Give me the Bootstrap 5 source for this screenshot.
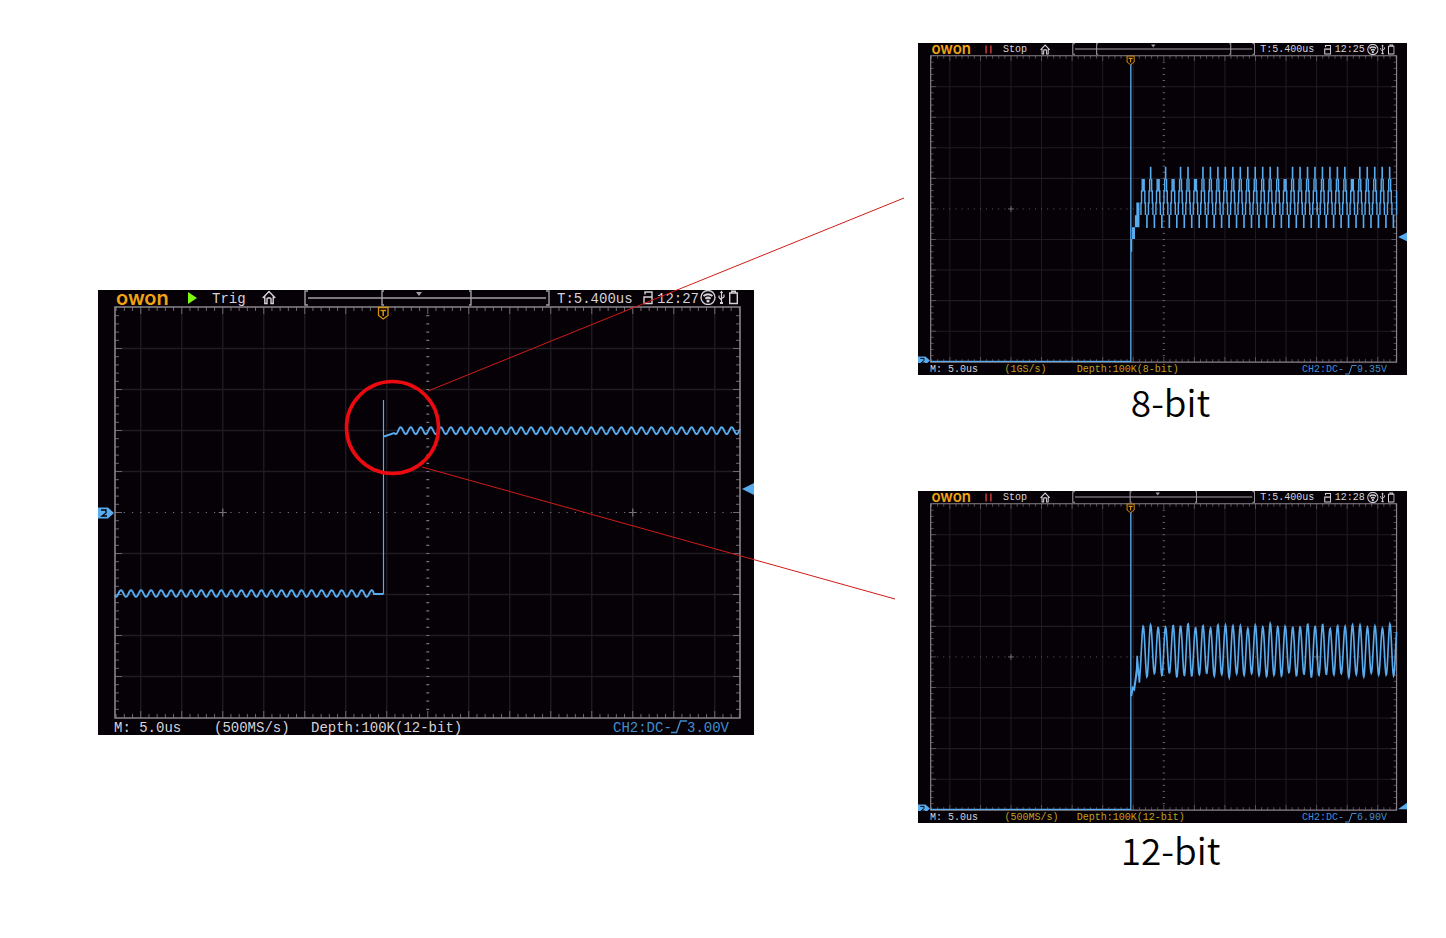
<!DOCTYPE html>
<html lang="en">
<head>
<meta charset="utf-8">
<meta name="viewport" content="width=device-width, initial-scale=1">
<title>8-bit and 12-bit oscilloscope resolution</title>
<link rel="stylesheet" href="https://cdn.jsdelivr.net/npm/bootstrap@5.3.0/dist/css/bootstrap.min.css">
<style>
  body { background: #fff; color: #000; }
  .board { display: grid; grid-template-columns: 98fr 656fr 164fr 489fr 39fr; align-items: start; }
  .live { grid-column: 2; padding-top: 20.05vw; }
  .closeups { grid-column: 4; padding-top: 3vw; }
  .callout { inset: 0 0 auto 0; pointer-events: none; }
  .scope { background: #060007; color: #d6d3d8; font-family: "Liberation Mono", monospace; font-size: 14px; line-height: 14px; }
  .scope-sm { font-size: 10px; line-height: 10px; }
  .bar-top, .bar-bottom { display: grid; grid-template-rows: 16px; align-items: center; white-space: nowrap; }
  .scope-sm .bar-top, .scope-sm .bar-bottom { grid-template-rows: 12px; }
  .bar-top span, .bar-bottom span { padding-top: 2px; }
  .bar-top { grid-template-columns: 18fr 72fr 24fr 50fr 42fr 246fr 7fr 86fr 14fr 43fr 18fr 11fr 25fr; }
  .bar-bottom { grid-template-columns: 16fr 100fr 97fr 302fr 58fr 16fr 67fr; }
  .bar-top > *, .bar-bottom > * { min-width: 0; }
  .bar-top > :first-child { grid-column: 2; }
  .bar-top > .clock-start { grid-column: 8; }
  .bar-bottom > :first-child { grid-column: 2; }
  .bar-top .brand { color: #f0a414; font: 600 20px/16px Inter, sans-serif; padding: 0; }
  .scope-sm .bar-top .brand { font-size: 15px; line-height: 12px; }
  .glyph { display: block; height: 15px; width: auto; overflow: visible; justify-self: start; }
  .scope-sm .glyph { height: 11px; }
  .line-art { fill: none; stroke: currentColor; stroke-width: 1.4; }
  .ch2 { color: #3f8fd0; }
  .limit { color: #c0a020; }
  .plot, .memory { display: block; width: 100%; height: auto; }
  .closeup-name { font: 350 37px/52px "Noto Sans CJK SC", sans-serif; margin-bottom: 64px; text-align: center; padding-left: 16px; }
</style>
<script src="https://cdn.jsdelivr.net/npm/bootstrap@5.3.0/dist/js/bootstrap.bundle.min.js"></script>
</head>
<body>
<svg class="d-none" aria-hidden="true">
  <symbol id="home" viewBox="0 0 14 15"><path class="line-art" d="M.7 8 7 1.5 13.3 8M2.8 6.5V13.5H5V9Q5 8 6 8H8Q9 8 9 9V13.5H11.2V6.5"/></symbol>
  <symbol id="lock" viewBox="0 0 10 15"><path class="line-art" d="M1 7H9V13.500H1ZM2 4.500V2H9V7"/></symbol>
  <symbol id="wifi" viewBox="0 0 16 15"><circle class="line-art" cx="8" cy="7.500" r="7"/><path fill="none" stroke="currentColor" stroke-width="2" d="M3.500 6Q8 2.500 12.500 6M5.400 8.700Q8 6.500 10.600 8.700"/><circle cx="8" cy="11" r="1.600" fill="currentColor"/></symbol>
  <symbol id="usb" viewBox="0 0 7 15"><path fill="none" stroke="currentColor" stroke-width="1.200" d="M3.500 2V13M1 5.500V7.500L3.500 10M6 4.500V7L3.500 8.500"/><path fill="currentColor" d="M1.800 3 3.500.5 5.200 3ZM2 12H5V14H2Z"/></symbol>
  <symbol id="battery" viewBox="0 0 9 15"><path class="line-art" d="M.7 3H8.300V13.500H.7ZM2.700 2.800V1.300H6.300V2.800"/></symbol>
  <symbol id="rising" viewBox="0 0 16 15"><path class="line-art" d="M0 13.500H5.500L9.500 2H16"/></symbol>
</svg>

<main class="board position-relative">
  <section class="live">
    <div class="scope">
      <div class="bar-top">
        <span class="brand">owon</span>
        <svg class="glyph" viewBox="0 0 10 15"><path fill="#7dfa12" d="M0 2 9 8 0 14Z"/></svg>
        <span>Trig</span>
        <svg class="glyph" viewBox="0 0 14 15"><use href="#home"/></svg>
        <svg class="memory" viewBox="0 0 246 16" data-from="78" data-to="167" data-mark="115"></svg>
        <span class="clock-start">T:5.400us</span>
        <svg class="glyph" viewBox="0 0 10 15"><use href="#lock"/></svg>
        <span>12:27</span>
        <svg class="glyph" viewBox="0 0 16 15"><use href="#wifi"/></svg>
        <svg class="glyph" viewBox="0 0 7 15"><use href="#usb"/></svg>
        <svg class="glyph" viewBox="0 0 9 15"><use href="#battery"/></svg>
      </div>
      <svg class="plot" viewBox="0 0 656 413" data-trace="step" data-zero="207" data-level="183" role="img" aria-label="Step with ripple"></svg>
      <div class="bar-bottom">
        <span>M: 5.0us</span><span>(500MS/s)</span><span>Depth:100K(12-bit)</span>
        <span class="ch2">CH2:DC-</span><svg class="glyph ch2" viewBox="0 0 16 15"><use href="#rising"/></svg><span class="ch2">3.00V</span>
      </div>
    </div>
  </section>

  <section class="closeups">
    <div class="scope scope-sm">
      <div class="bar-top">
        <span class="brand">owon</span>
        <svg class="glyph" viewBox="0 0 10 15"><path stroke="#c8403c" stroke-width="2" d="M1.500 2V13M8 2V13"/></svg>
        <span>Stop</span>
        <svg class="glyph" viewBox="0 0 14 15"><use href="#home"/></svg>
        <svg class="memory" viewBox="0 0 246 16" data-from="33" data-to="213" data-mark="109"></svg>
        <span class="clock-start">T:5.400us</span>
        <svg class="glyph" viewBox="0 0 10 15"><use href="#lock"/></svg>
        <span>12:25</span>
        <svg class="glyph" viewBox="0 0 16 15"><use href="#wifi"/></svg>
        <svg class="glyph" viewBox="0 0 7 15"><use href="#usb"/></svg>
        <svg class="glyph" viewBox="0 0 9 15"><use href="#battery"/></svg>
      </div>
      <svg class="plot" viewBox="0 0 656 413" data-trace="coarse" data-zero="410" data-level="244" role="img" aria-label="Ripple at 8 bits"></svg>
      <div class="bar-bottom">
        <span>M: 5.0us</span><span class="limit">(1GS/s)</span><span class="limit">Depth:100K(8-bit)</span>
        <span class="ch2">CH2:DC-</span><svg class="glyph ch2" viewBox="0 0 16 15"><use href="#rising"/></svg><span class="ch2">9.35V</span>
      </div>
    </div>
    <h2 class="closeup-name">8-bit</h2>

    <div class="scope scope-sm">
      <div class="bar-top">
        <span class="brand">owon</span>
        <svg class="glyph" viewBox="0 0 10 15"><path stroke="#c8403c" stroke-width="2" d="M1.500 2V13M8 2V13"/></svg>
        <span>Stop</span>
        <svg class="glyph" viewBox="0 0 14 15"><use href="#home"/></svg>
        <svg class="memory" viewBox="0 0 246 16" data-from="78" data-to="167" data-mark="115"></svg>
        <span class="clock-start">T:5.400us</span>
        <svg class="glyph" viewBox="0 0 10 15"><use href="#lock"/></svg>
        <span>12:28</span>
        <svg class="glyph" viewBox="0 0 16 15"><use href="#wifi"/></svg>
        <svg class="glyph" viewBox="0 0 7 15"><use href="#usb"/></svg>
        <svg class="glyph" viewBox="0 0 9 15"><use href="#battery"/></svg>
      </div>
      <svg class="plot" viewBox="0 0 656 413" data-trace="fine" data-zero="410" data-level="410" role="img" aria-label="Ripple at 12 bits"></svg>
      <div class="bar-bottom">
        <span>M: 5.0us</span><span class="limit">(500MS/s)</span><span class="limit">Depth:100K(12-bit)</span>
        <span class="ch2">CH2:DC-</span><svg class="glyph ch2" viewBox="0 0 16 15"><use href="#rising"/></svg><span class="ch2">6.90V</span>
      </div>
    </div>
    <h2 class="closeup-name mb-0">12-bit</h2>
  </section>

  <svg class="callout position-absolute w-100" viewBox="0 0 1446 938" fill="none" aria-hidden="true">
    <path stroke="#d01c18" d="M428 391 904 198M422 467 895 599"/>
    <circle cx="392.500" cy="427.500" r="46" stroke="#ea0a10" stroke-width="3.600"/>
  </svg>
</main>

<script>
  const BLUE = '#58abed';
  const CX = 329.75, CY = 206.5, DIV = 41;

  function graticule() {
    let grid = '', ticks = '', dots = '';
    for (let k = -7; k <= 7; k++) if (k) grid += `M${CX + DIV * k} 1V412`;
    for (let k = -4; k <= 4; k++) if (k) grid += `M17 ${CY + DIV * k}H642`;
    for (let i = -38; i <= 38; i++) {
      const x = CX + i * DIV / 5, n = i % 5 ? 4 : 7;
      ticks += `M${x} 1v${n}M${x} 412v-${n}`;
      dots += `M${x - 0.6} ${CY}h1.200`;
    }
    for (let i = -24; i <= 24; i++) {
      const y = CY + i * DIV / 5, n = i % 5 ? 4 : 7;
      ticks += `M17 ${y}h${n}M642 ${y}h-${n}`;
      dots += `M${CX - 1.5} ${y}h3`;
    }
    for (const k of [-5, 5]) dots += `M${CX + DIV * k - 4} ${CY}h8M${CX + DIV * k} ${CY - 4}v8`;
    return `<g fill="none"><path stroke="#1e1c22" stroke-width="1.400" d="${grid}"/>
      <path stroke="#6d686f" d="${ticks}"/><path stroke="#78737b" stroke-width="1.200" d="${dots}"/>
      <path stroke="#89828b" stroke-width="1.600" d="M17 1H642V412H17Z"/></g>`;
  }

  function ripple(from, to, peak, mid, amp) {
    let d = '';
    for (let x = from; x <= to; x += 0.5) {
      d += `L${x.toFixed(1)} ${(mid - amp(x) * Math.cos((x - peak) / 10.03 * 2 * Math.PI)).toFixed(1)}`;
    }
    return d;
  }

  const traces = {
    step() {
      const low = 'M17 289' + ripple(18, 275, 23, 287.5, () => 3.3) + 'L276 288H285.5';
      const high = 'M286 130.5 296 127' + ripple(297, 642, 302.7, 124.7, () => 3.4);
      return `<path stroke-width="1.900" d="${low}${high}"/><path stroke-width="1.200" d="M285.500 94V288"/>`;
    },
    coarse() {
      const low = [2, 4, 7, 19, 28, 0];
      let d = '', wide = 'M288 231V247M290 231V247M292 215V231M294 198V231M296 198V231';
      for (let i = 0; i < 34; i++) {
        const p = 302.1 + i * 10.02, b = p + 5;
        if (!low.includes(i)) wide += `M${p} 150V167`;
        else wide += `M${p} 166.5V182`;
        d += `M${p - 1.3} 166.500V182.500H${p - 2.2}V198.500H${p - 3}V214.600`;
        d += `M${p + 1.3} 166.500V182.500H${p + 2.2}V198.500H${p + 3}V214.600`;
        wide += `M${b} 214V232`;
      }
      return `<path stroke-width="1.800" d="M17 411H285.500V8M286.500 247V264M642 182V214"/>
        <path stroke-width="1.900" d="${d}"/><path stroke-width="2.200" d="${wide}"/>`;
    },
    fine() {
      const amp = x => 33 + 2 * Math.sin(x * 0.35) + 1.5 * Math.sin(x * 0.11);
      return `<path stroke-width="1.800" d="M17 411H285.500V8"/>
        <path stroke-width="2.800" d="M286 259 288 248 290 250 294 222"/>
        <path stroke-width="2.200" d="M293 232 294 205 297 241${ripple(298, 642, 302.1, 198, amp)}"/>`;
    }
  };

  document.querySelectorAll('.plot').forEach(svg => {
    const { trace, zero, level } = svg.dataset;
    const z = +zero, l = +level;
    const arrow = l > 400 ? `M644 411 656 402V411Z` : `M644 ${l} 656 ${l - 6}V${l + 6}Z`;
    svg.innerHTML = graticule() +
      `<g fill="none" stroke="${BLUE}">${traces[trace]()}</g>
       <path fill="#060007" stroke="#d9930f" stroke-width="1.300" d="M280.500 1.500H290V9.500L285.200 13 280.500 9.500Z"/>
       <path stroke="#d9930f" stroke-width="1.500" d="M282.500 4.500H288M285.200 4.500V10"/>
       <path fill="${BLUE}" d="M0 ${z - 5.5}H10L16 ${z} 10 ${z + 5.5}H0Z"/>
       <path fill="none" stroke="#060007" stroke-width="1.300" d="M3 ${z - 3}H8V${z}L4 ${z + 3}H9"/>
       <path fill="${BLUE}" d="${arrow}"/>`;
  });

  document.querySelectorAll('.memory').forEach(svg => {
    const { from, to, mark } = svg.dataset;
    svg.innerHTML = `<path fill="none" stroke="#a39ea6" stroke-width="1.400"
      d="M4 1H1V15H4M242 1H245V15H242M4 8H242M${+from + 2} 1H${from}V15H${+from + 2}M${to - 2} 1H${to}V15H${to - 2}"/>
      <path fill="#a39ea6" d="M${mark - 3} 2H${+mark + 3}L${mark} 6Z"/>`;
  });
</script>
</body>
</html>
